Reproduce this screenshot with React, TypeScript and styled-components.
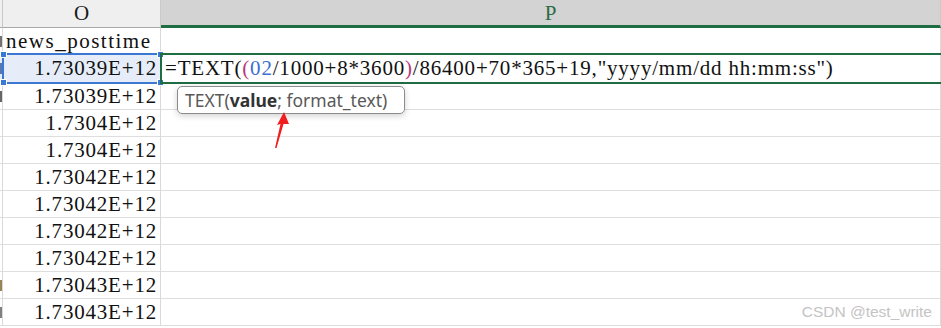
import React from "react";
import styled, { createGlobalStyle, css } from "styled-components";

const Global = createGlobalStyle`
  html, body { margin: 0; padding: 0; background: #fff; overflow: hidden; }
  #root { width: 941px; height: 328px; }
`;

const Page = styled.div`
  position: relative;
  width: 941px;
  height: 328px;
  overflow: hidden;
  background: #fff;
`;

const Sheet = styled.div`
  display: grid;
  grid-template-columns: 3px 158px 1fr;
  grid-template-rows: 28px 27px 28px repeat(9, 27px);
  width: 100%;
`;

const HeaderCell = styled.div<{ $active?: boolean }>`
  box-sizing: border-box;
  display: flex;
  align-items: center;
  justify-content: center;
  font-family: "Liberation Serif", serif;
  font-size: 21px;
  background: ${(p) => (p.$active ? "#d3d3d3" : "#efefef")};
  color: ${(p) => (p.$active ? "#2c6b45" : "#1a1a1a")};
  border-right: 1px solid #c9c9c9;
  border-bottom: ${(p) => (p.$active ? "3px solid #1f6e43" : "1px solid #a9a9a9")};
  padding-top: ${(p) => (p.$active ? "2px" : "0")};
`;

const Cell = styled.div<{ $align?: "left" | "right"; $wide?: boolean; $sel?: boolean; $edge?: boolean }>`
  position: relative;
  box-sizing: border-box;
  display: flex;
  align-items: center;
  justify-content: ${(p) => (p.$align === "right" ? "flex-end" : "flex-start")};
  padding: 0 ${(p) => (p.$align === "right" ? "3px" : "0")} 0 ${(p) => (p.$edge ? "0" : "3px")};
  font-family: "Liberation Serif", serif;
  font-size: 21px;
  letter-spacing: ${(p) => (p.$wide ? "1.5px" : "0.8px")};
  color: #111;
  white-space: nowrap;
  overflow: ${(p) => (p.$edge ? "hidden" : "visible")};
  border-right: 1px solid #d9d9d9;
  border-bottom: 1px solid #dedede;
  background: ${(p) => (p.$sel ? "#e6edf8" : "#fff")};
`;

const EdgeMark = styled.span<{ $tone: string }>`
  display: block;
  width: 2px;
  height: 11px;
  background: ${(p) => p.$tone};
  opacity: 0.75;
`;

const SelectBox = styled.div`
  position: absolute;
  left: -1px;
  right: -2px;
  top: -2px;
  bottom: -2px;
  border: 2px solid #3b78d4;
  pointer-events: none;
  z-index: 2;
`;

const Handle = styled.span<{ $pos: "tl" | "tr" | "bl" | "br" }>`
  position: absolute;
  width: 5px;
  height: 5px;
  background: #3b78d4;
  border: 1px solid #fff;
  ${(p) => (p.$pos[0] === "t" ? css`top: -4px;` : css`bottom: -4px;`)}
  ${(p) => (p.$pos[1] === "l" ? css`left: -4px;` : css`right: -4px;`)}
`;

const EditBox = styled.div`
  position: absolute;
  left: -1px;
  right: -4px;
  top: -2px;
  bottom: -2px;
  border: 2px solid #1f6e43;
  border-right: none;
  pointer-events: none;
  z-index: 2;
`;

const Formula = styled.span`
  position: relative;
  z-index: 3;
  padding-left: 1px;
`;

const Paren = styled.span`
  color: #b8387a;
`;

const Ref = styled.span`
  color: #3d6fcc;
`;

const Tooltip = styled.div`
  position: absolute;
  left: 177px;
  top: 86px;
  width: 228px;
  height: 28px;
  box-sizing: border-box;
  display: flex;
  align-items: center;
  padding-left: 7px;
  background: #fff;
  border: 1px solid #8c8c8c;
  border-radius: 5px;
  box-shadow: 0 2px 6px rgba(0, 0, 0, 0.18);
  font-family: "Noto Sans", "Open Sans", sans-serif;
  font-size: 17.5px;
  color: #595959;
  white-space: nowrap;
  z-index: 5;
`;

const Bold = styled.b`
  color: #333;
  font-weight: 700;
`;

const Arrow = styled.svg`
  position: absolute;
  left: 266px;
  top: 108px;
  z-index: 6;
`;

const Watermark = styled.div`
  position: absolute;
  right: 9px;
  bottom: 7px;
  font-family: "Liberation Sans", Arial, sans-serif;
  font-size: 15.5px;
  color: #c4c4c4;
  z-index: 6;
`;

const values = [
  "1.73039E+12",
  "1.73039E+12",
  "1.7304E+12",
  "1.7304E+12",
  "1.73042E+12",
  "1.73042E+12",
  "1.73042E+12",
  "1.73042E+12",
  "1.73043E+12",
  "1.73043E+12",
];

const edgeTones = ["#444", "#2c4f9a", "#333", "", "", "", "", "", "", "#7a5a20", "#555"];

export default function App() {
  return (
    <Page>
      <Global />
      <Sheet>
        <HeaderCell />
        <HeaderCell>O</HeaderCell>
        <HeaderCell $active>P</HeaderCell>

        <Cell $edge>{edgeTones[0] && <EdgeMark $tone={edgeTones[0]} />}</Cell>
        <Cell $align="left" $wide>
          news_posttime
        </Cell>
        <Cell />

        {values.map((v, i) => (
          <React.Fragment key={i}>
            <Cell $edge $sel={i === 0}>
              {edgeTones[i + 1] && <EdgeMark $tone={edgeTones[i + 1]} />}
            </Cell>
            <Cell $align="right" $sel={i === 0}>
              {v}
              {i === 0 && (
                <SelectBox>
                  <Handle $pos="tl" />
                  <Handle $pos="tr" />
                  <Handle $pos="bl" />
                  <Handle $pos="br" />
                </SelectBox>
              )}
            </Cell>
            <Cell>
              {i === 0 && (
                <>
                  <EditBox />
                  <Formula>
                    =TEXT(<Paren>(</Paren>
                    <Ref>02</Ref>/1000+8*3600<Paren>)</Paren>/86400+70*365+19,"yyyy/mm/dd hh:mm:ss")
                  </Formula>
                </>
              )}
            </Cell>
          </React.Fragment>
        ))}
      </Sheet>

      <Tooltip>
        TEXT(<Bold>value</Bold>; format_text)
      </Tooltip>

      <Arrow width="30" height="44" viewBox="0 0 30 44">
        <polygon points="18,4 11,17 14.5,16 9,40 10.5,40 17.5,16 23,16" fill="#f01e1e" />
      </Arrow>

      <Watermark>CSDN @test_write</Watermark>
    </Page>
  );
}
